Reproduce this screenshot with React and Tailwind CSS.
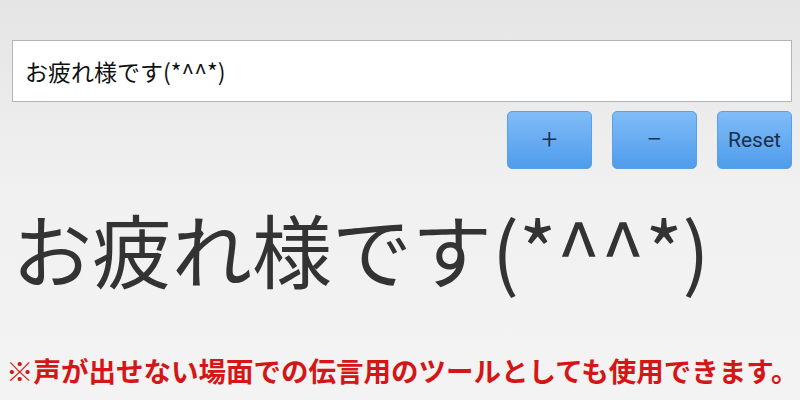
import React, { useState } from 'react';

export default function App() {
  const [text, setText] = useState('お疲れ様です(*^^*)');
  const [size, setSize] = useState(80);

  const btn =
    "h-[58px] rounded-[5px] border border-[#5a9fe0] bg-gradient-to-b from-[#80bcf7] to-[#4e9cec] text-[#1c2f4a] leading-none font-['Roboto',sans-serif]";

  return (
    <div className="w-[800px] h-[400px] overflow-hidden bg-gradient-to-b from-[#e5e5e5] via-[#f1f1f1] to-[#f3f3f3] flex flex-col font-['Noto_Sans_CJK_JP','Noto_Sans',sans-serif]">
      {/* Input */}
      <div className="pt-[40px] pl-[12px] pr-[8px]">
        <input
          value={text}
          onChange={(e) => setText(e.target.value)}
          className="w-full h-[62px] bg-white border border-[#b4b4b4] px-[12px] text-[23px] text-[#111] outline-none font-['Noto_Sans_CJK_JP',sans-serif]"
        />
      </div>

      {/* Buttons */}
      <div className="flex justify-end gap-[20px] pr-[8px] mt-[9px]">
        <button onClick={() => setSize(size + 4)} className={btn + ' w-[85px] text-[28px] font-light'}>
          +
        </button>
        <button onClick={() => setSize(size - 4)} className={btn + ' w-[85px] text-[28px] font-light'}>
          −
        </button>
        <button onClick={() => setSize(80)} className={btn + ' w-[75px] text-[21px]'}>
          Reset
        </button>
      </div>

      {/* Display */}
      <div className="pl-[12px] mt-[22px] h-[112px] flex items-center">
        <div className="text-[#333] leading-none whitespace-nowrap" style={{ fontSize: size }}>
          {text}
        </div>
      </div>

      {/* Note */}
      <div className="pl-[6px] mt-[54px] text-[27.5px] font-bold text-[#d41616] leading-none whitespace-nowrap">
        ※声が出せない場面での伝言用のツールとしても使用できます。
      </div>
    </div>
  );
}
